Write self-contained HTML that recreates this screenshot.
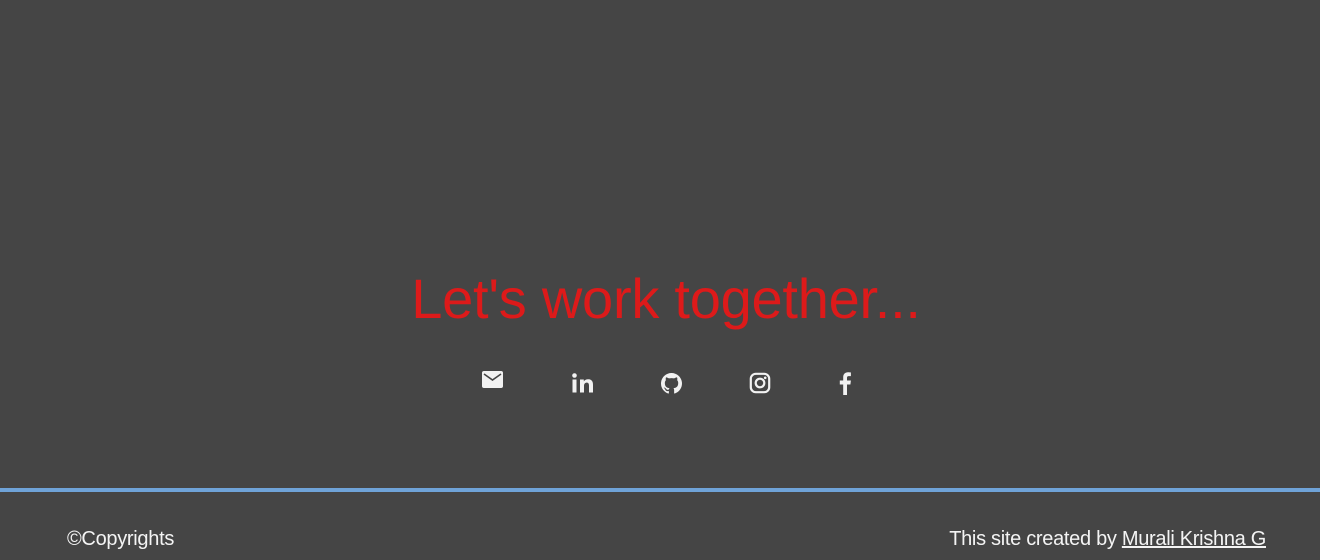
<!DOCTYPE html>
<html><head><meta charset="utf-8"><style>
html,body{margin:0;padding:0;}
body{width:1320px;height:560px;background:#454545;position:relative;overflow:hidden;font-family:"Liberation Sans",sans-serif;}
h1{position:absolute;left:0;width:1320px;top:266px;margin:0;text-align:center;font-weight:normal;font-size:56px;letter-spacing:-0.25px;color:#dd1a1a;line-height:66px;padding-left:12px;box-sizing:border-box;}
.ic{position:absolute;fill:#f2f2f2;}
.line{position:absolute;left:0;top:488px;width:1320px;height:4px;background:#6fa3d8;}
.ft{position:absolute;top:528px;font-size:20px;color:#f4f4f4;line-height:22px;letter-spacing:-0.3px;}
.ft a{color:#f4f4f4;text-decoration:underline;}
</style></head><body>
<h1>Let's work together...</h1>
<svg class="ic" style="left:482px;top:371px" width="21" height="17" viewBox="0 0 21 17"><rect x="0" y="0" width="21" height="17" rx="2"/><path d="M2 3 L10.5 9 L19 3" stroke="#454545" stroke-width="1.6" fill="none"/></svg>
<svg class="ic" style="left:572px;top:373px" width="22" height="20" viewBox="0 0 22 20"><circle cx="2.5" cy="2.5" r="2.3"/><rect x="0.5" y="6.5" width="4" height="13"/><path d="M8 6.5h3.8v1.9c.8-1.3 2.3-2.2 4.3-2.2 3.4 0 4.9 2 4.9 5.6V19.5h-4v-7c0-1.8-.6-2.9-2.2-2.9-1.700 0-2.800 1.2-2.800 3.1v6.8H8z"/></svg>
<svg class="ic" style="left:661px;top:373px" width="21" height="21" viewBox="0 0 16 16"><path d="M8 0C3.58 0 0 3.58 0 8c0 3.540 2.29 6.530 5.470 7.590.4.07.55-.17.55-.38 0-.19-.01-.82-.01-1.49-2.01.37-2.530-.49-2.690-.94-.09-.23-.48-.94-.82-1.130-.28-.15-.68-.52-.01-.53.63-.01 1.080.58 1.230.82.72 1.210 1.870.87 2.330.66.07-.52.28-.87.51-1.070-1.780-.2-3.640-.89-3.640-3.950 0-.87.31-1.590.82-2.150-.08-.2-.36-1.020.08-2.120 0 0 .67-.21 2.200.82.64-.18 1.320-.27 2-.27.68 0 1.360.09 2 .27 1.530-1.040 2.200-.82 2.200-.82.44 1.100.16 1.920.08 2.120.51.56.82 1.270.82 2.150 0 3.070-1.870 3.750-3.650 3.950.29.25.54.73.54 1.480 0 1.070-.01 1.930-.01 2.200 0 .21.15.46.55.38A8.010 8.010 0 0016 8c0-4.420-3.580-8-8-8z"/></svg>
<svg style="position:absolute;left:749px;top:372px" width="22" height="22" viewBox="0 0 22 22"><rect x="1.8" y="1.8" width="18.4" height="18.4" rx="5" fill="none" stroke="#f2f2f2" stroke-width="2.2"/><circle cx="11" cy="11" r="4.3" fill="none" stroke="#f2f2f2" stroke-width="2.2"/><circle cx="16.2" cy="5.8" r="1.3" fill="#f2f2f2"/></svg>
<svg class="ic" style="left:838px;top:372px" width="14" height="23" viewBox="0 0 14 23"><path d="M9 23V12.5h3.4l.5-4H9V6c0-1.1.3-1.9 1.9-1.9h2V.5C12.5.4 11.3.3 10 .3 7.2.3 5.2 2 5.2 5.2v3.3H1.8v4h3.4V23z"/></svg>
<div class="line"></div>
<div class="ft" style="left:67px">©Copyrights</div>
<div class="ft" style="right:54px">This site created by <a>Murali Krishna G</a></div>
</body></html>
